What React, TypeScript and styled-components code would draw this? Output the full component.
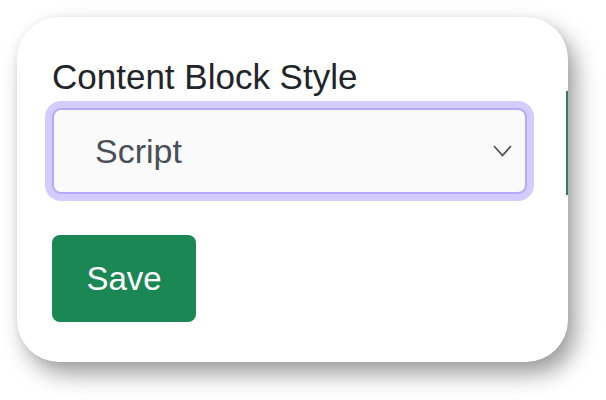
import React, { FC } from "react";
import styled, { createGlobalStyle } from "styled-components";

const GlobalStyle = createGlobalStyle`
  html, body {
    margin: 0;
    padding: 0;
    background: #ffffff;
  }
  body {
    font-family: "Liberation Sans", Arial, sans-serif;
  }
`;

const Page = styled.div`
  padding: 17px 0 0 17px;
  min-height: 400px;
  box-sizing: border-box;
`;

const Card = styled.div`
  position: relative;
  width: 551px;
  box-sizing: border-box;
  padding: 35px 41px 40px 35px;
  background: #ffffff;
  border-radius: 42px;
  box-shadow: 8px 12px 22px rgba(0, 0, 0, 0.38), 0 0 6px rgba(0, 0, 0, 0.06);
  &::after {
    content: "";
    position: absolute;
    right: 0;
    top: 74px;
    width: 2px;
    height: 104px;
    background: #2b7a6c;
  }
`;

const Label = styled.label`
  display: block;
  font-size: 35px;
  line-height: 50px;
  color: #212529;
  margin-bottom: 6px;
`;

const SelectBox = styled.div`
  display: flex;
  align-items: center;
  justify-content: space-between;
  height: 86px;
  box-sizing: border-box;
  padding: 0 13px 0 41px;
  background: #fafafa;
  border: 2px solid #b6a9f7;
  border-radius: 9px;
  box-shadow: 0 0 0 7px #d4cbff;
  font-size: 34px;
  color: #495057;
`;

const Chevron = styled.svg`
  width: 19px;
  height: 12px;
  flex: none;
`;

const Actions = styled.div`
  margin-top: 41px;
`;

const Button = styled.button`
  width: 144px;
  height: 87px;
  border: none;
  border-radius: 8px;
  background: #1a8754;
  color: #ffffff;
  font-family: "Liberation Sans", Arial, sans-serif;
  font-size: 33px;
  padding: 0;
  cursor: pointer;
`;

const App: FC = () => {
  return (
    <Page>
      <GlobalStyle />
      <Card>
        <Label>Content Block Style</Label>
        <SelectBox>
          <span>Script</span>
          <Chevron viewBox="0 0 19 12">
            <polyline
              points="1,1 9.5,10.5 18,1"
              fill="none"
              stroke="#4b5158"
              strokeWidth="1.7"
            />
          </Chevron>
        </SelectBox>
        <Actions>
          <Button>Save</Button>
        </Actions>
      </Card>
    </Page>
  );
};

export default App;
